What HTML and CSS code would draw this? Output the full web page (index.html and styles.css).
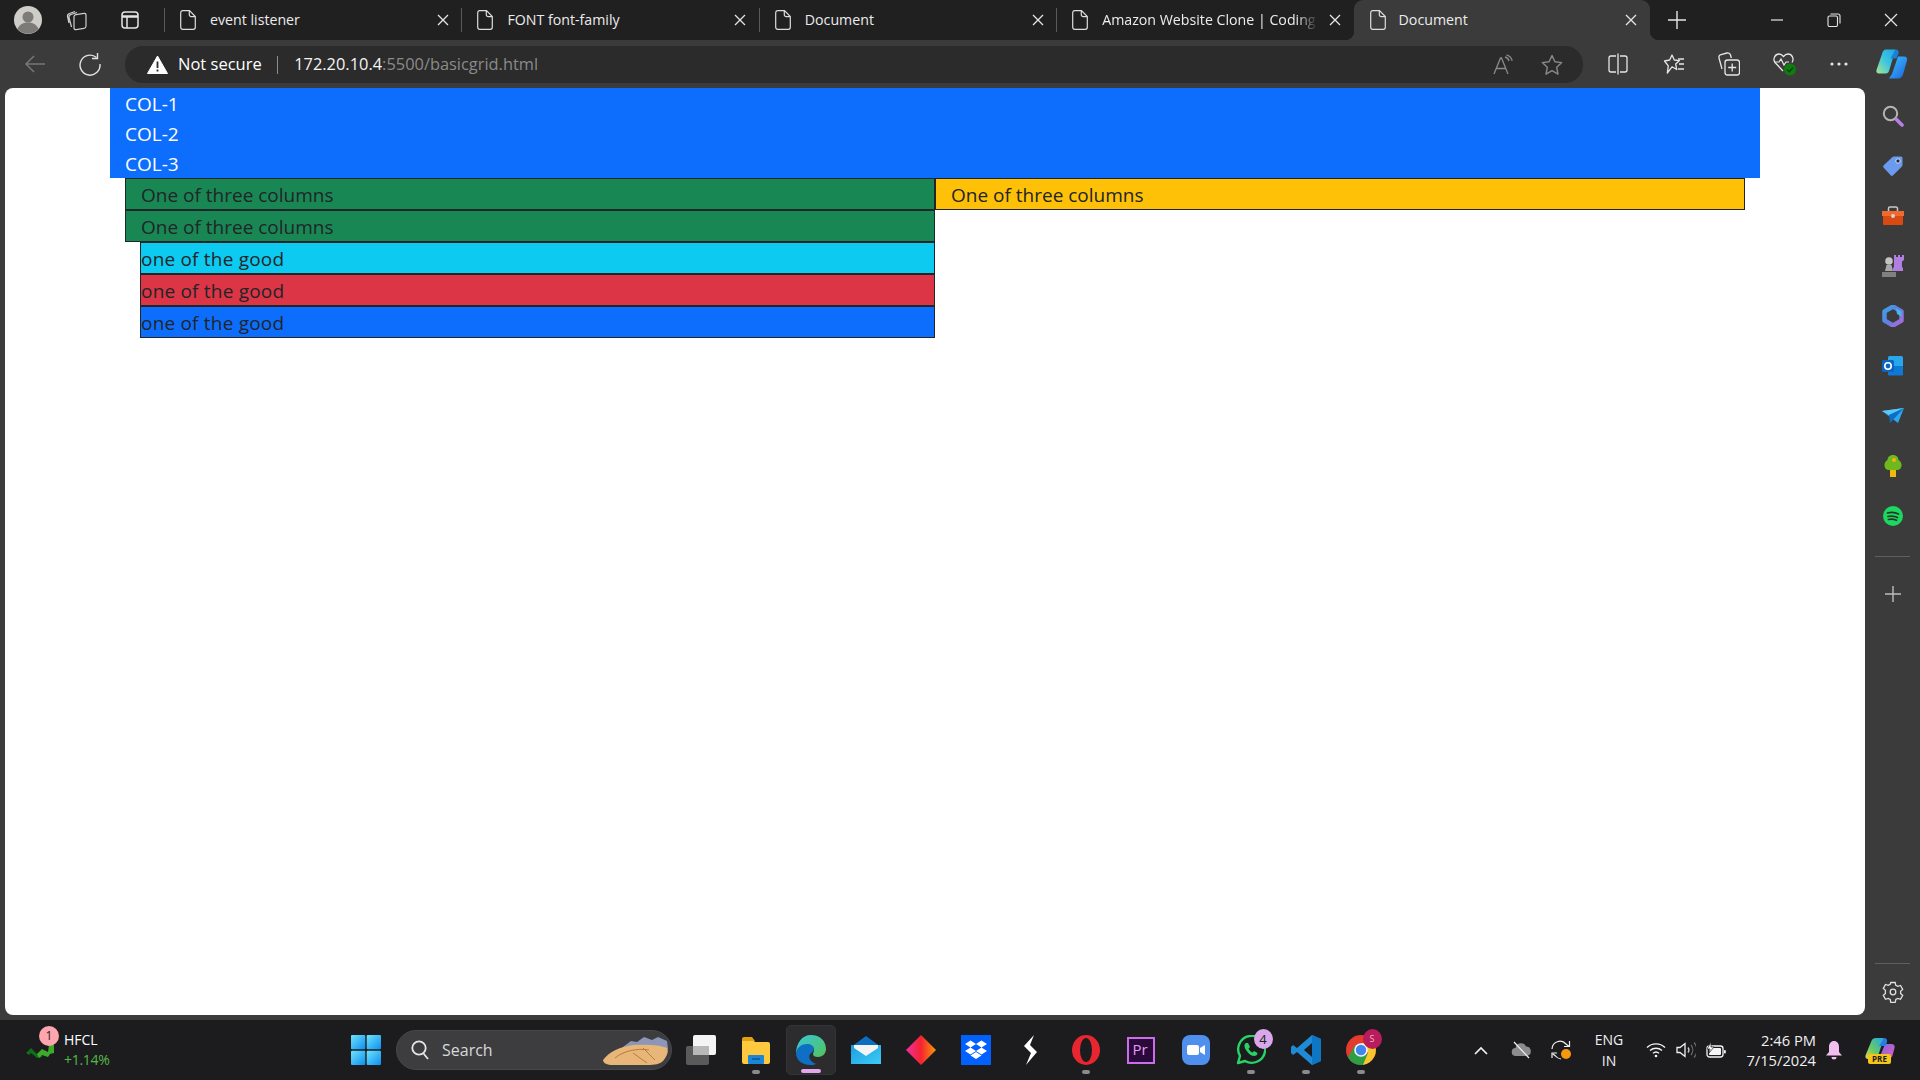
FILE: index.html
```html
<!DOCTYPE html>
<html lang="en">
<head>
<meta charset="utf-8">
<title>Document</title>
<link rel="stylesheet" href="styles.css">
</head>
<body>
<svg class="defs" width="0" height="0" aria-hidden="true">
  <defs>
    <symbol id="doc" viewBox="0 0 16 20"><path d="M2.5 .7h7l5.8 5.8v10.8a2 2 0 0 1-2 2H2.7a2 2 0 0 1-2-2V2.7a2 2 0 0 1 1.8-2zM9.3 .9v3.8a2 2 0 0 0 2 2h3.9" fill="none" stroke="#dcdcdc" stroke-width="1.2"/></symbol>
    <symbol id="x" viewBox="0 0 12 12"><path d="M1 1l10 10M11 1L1 11" stroke="#e6e6e6" stroke-width="1.3" fill="none"/></symbol>
    <linearGradient id="gWin" x1="0" y1="0" x2="1" y2="1"><stop offset="0" stop-color="#6fe3fb"/><stop offset="1" stop-color="#0c8ff0"/></linearGradient>
    <linearGradient id="gCop" x1="0" y1="0" x2="1" y2="1"><stop offset="0" stop-color="#38c6f4"/><stop offset=".55" stop-color="#2a8ff0"/><stop offset="1" stop-color="#1f5fd6"/></linearGradient>
    <linearGradient id="gCop2" x1="0" y1="1" x2="1" y2="0"><stop offset="0" stop-color="#a6e88c"/><stop offset=".5" stop-color="#3fc4e0"/><stop offset="1" stop-color="#19a9e8"/></linearGradient>
    <linearGradient id="gDia" x1="0" y1="0" x2="1" y2="0"><stop offset="0" stop-color="#f02fa0"/><stop offset=".5" stop-color="#f5232f"/><stop offset="1" stop-color="#f79a0a"/></linearGradient>
    <linearGradient id="gEdge" x1="0" y1="0" x2="1" y2="1"><stop offset="0" stop-color="#36c7d8"/><stop offset="1" stop-color="#55c25a"/></linearGradient>
    <linearGradient id="gMail" x1="0" y1="0" x2="1" y2="1"><stop offset="0" stop-color="#1b9de2"/><stop offset="1" stop-color="#3ecbf5"/></linearGradient>
    <linearGradient id="gTrayL" x1="0" y1="1" x2="1" y2="0"><stop offset="0" stop-color="#e8d24a"/><stop offset=".45" stop-color="#62c96a"/><stop offset="1" stop-color="#22a8ee"/></linearGradient>
    <linearGradient id="gTrayR" x1="0" y1="0" x2="1" y2="1"><stop offset="0" stop-color="#7a6ae8"/><stop offset="1" stop-color="#e85cb8"/></linearGradient>
    <linearGradient id="gM365" x1="0" y1="0" x2="1" y2="1"><stop offset="0" stop-color="#3aa2e6"/><stop offset=".5" stop-color="#5f7fe0"/><stop offset="1" stop-color="#b06ad8"/></linearGradient>
  </defs>
</svg>

<div class="tabstrip">
  <div class="strip-left">
    <svg class="avatar" width="28" height="28" viewBox="0 0 28 28"><circle cx="14" cy="14" r="14" fill="#cfcdc8"/><circle cx="14" cy="11" r="5.5" fill="#7d7b78"/><path d="M3.5 23c2-5 6-6.500 10.500-6.500S22.500 18 24.500 23A14 14 0 0 1 3.500 23z" fill="#7d7b78"/></svg>
    <svg class="strip-ic" width="22" height="22" viewBox="0 0 22 22" fill="none" stroke="#cfcfcf" stroke-width="1.2"><rect x="8" y="5" width="12" height="15" rx="2" transform="skewY(-8) translate(0 2)"/><path d="M5.500 18L3 8.500c-.3-1.500.5-2.500 2-3L11 3.500M3 14L1.500 7.500C1.300 6 2 5 3.500 4.500L9 2.500"/></svg>
    <svg class="strip-ic strip-ic-b" width="18" height="18" viewBox="0 0 18 18" fill="none" stroke="#e4e4e4" stroke-width="1.5"><rect x="1" y="1" width="16" height="16" rx="3"/><path d="M1 5.500h16" stroke-width="2.500"/><path d="M6 5.500V17"/></svg>
  </div>
  <div class="tab"><i class="tab-sep"></i><svg class="doc"><use href="#doc"/></svg><span class="tab-title">event listener</span><svg class="tab-x"><use href="#x"/></svg></div>
  <div class="tab"><i class="tab-sep"></i><svg class="doc"><use href="#doc"/></svg><span class="tab-title">FONT font-family</span><svg class="tab-x"><use href="#x"/></svg></div>
  <div class="tab"><i class="tab-sep"></i><svg class="doc"><use href="#doc"/></svg><span class="tab-title">Document</span><svg class="tab-x"><use href="#x"/></svg></div>
  <div class="tab tab-prev"><i class="tab-sep"></i><svg class="doc"><use href="#doc"/></svg><span class="tab-title tab-fade">Amazon Website Clone | Coding</span><svg class="tab-x"><use href="#x"/></svg></div>
  <div class="tab tab-active"><svg class="doc"><use href="#doc"/></svg><span class="tab-title">Document</span><svg class="tab-x"><use href="#x"/></svg></div>
  <svg class="new-tab" width="18" height="18" viewBox="0 0 18 18"><path d="M9 0v18M0 9h18" stroke="#e6e6e6" stroke-width="1.400"/></svg>
  <div class="win-ctrls">
    <svg class="win-btn" width="14" height="14" viewBox="0 0 14 14"><path d="M1 7h12" stroke="#e6e6e6" stroke-width="1.200"/></svg>
    <svg class="win-btn" width="14" height="14" viewBox="0 0 14 14" fill="none" stroke="#e6e6e6" stroke-width="1.100"><rect x="1" y="3" width="9.500" height="10.500" rx="1.500"/><path d="M3.500 1h7.500a2 2 0 0 1 2 2v7.500"/></svg>
    <svg class="win-btn" width="14" height="14" viewBox="0 0 14 14"><path d="M1 1l12 12M13 1L1 13" stroke="#e6e6e6" stroke-width="1.200"/></svg>
  </div>
</div>

<div class="toolbar">
  <svg class="back" width="24" height="24" viewBox="0 0 24 24" fill="none" stroke="#777" stroke-width="1.500"><path d="M3 12h19M11 4l-8 8 8 8"/></svg>
  <svg class="reload" width="24" height="24" viewBox="0 0 24 24" fill="none" stroke="#e2e2e2" stroke-width="1.400"><path d="M18.500 5.500A10 10 0 1 0 22 12"/><path d="M19.500 1v5.500H14"/></svg>
  <div class="address">
    <svg class="warn" width="21" height="19" viewBox="0 0 21 19"><path d="M10.500 1L20.500 18.500H.5z" fill="#fff" stroke="#fff" stroke-linejoin="round"/><path d="M10.500 6.500v6.500M10.500 14.500v2" stroke="#2b2b2b" stroke-width="1.800"/></svg>
    <span class="not-secure">Not secure</span>
    <i class="addr-sep"></i>
    <span class="url"><b class="url-host">172.20.10.4</b>:5500/basicgrid.html</span>
    <div class="addr-right">
      <svg width="22" height="22" viewBox="0 0 22 22" fill="none" stroke="#8a8a8a" stroke-width="1.300"><path d="M2 20L8.500 4h1L16 20M4.500 14.500h9.500"/><path d="M13 3c2 .5 3.500 2 4 4M14.500 .8c3 .8 5 3 5.700 6"/></svg>
      <svg width="22" height="22" viewBox="0 0 22 22" fill="none" stroke="#8a8a8a" stroke-width="1.400" stroke-linejoin="round"><path d="M11 1.500l2.900 6.300 6.800.8-5 4.700 1.300 6.800-6-3.400-6 3.400 1.300-6.800-5-4.700 6.800-.8z"/></svg>
    </div>
  </div>
  <div class="tool-btns">
    <span class="tool-slot"><svg width="20" height="22" viewBox="0 0 20 22" fill="none" stroke="#e6e6e6" stroke-width="1.300"><path d="M8 3H3a2 2 0 0 0-2 2v12a2 2 0 0 0 2 2h5M12 3h5a2 2 0 0 1 2 2v12a2 2 0 0 1-2 2h-5M10 .5v21"/></svg></span>
    <span class="tool-slot"><svg width="22" height="22" viewBox="0 0 22 22" fill="none" stroke="#e6e6e6" stroke-width="1.300" stroke-linejoin="round"><path d="M9 2l2.300 5 5.200.6-3.800 3.500 1 5.400L9 13.800 4.300 20l1-7.100L1.500 8l5.200-1z"/><path d="M15 6h6M16 11h5M15 16h6"/></svg></span>
    <span class="tool-slot"><svg width="22" height="24" viewBox="0 0 22 24" fill="none" stroke="#e6e6e6" stroke-width="1.300"><path d="M4 17L1 6c-.4-1.500.4-3 2-3.400L9 1c1.700-.4 3 .5 3.500 2l.8 3"/><rect x="7" y="8" width="14.500" height="15" rx="2.500"/><path d="M14.200 11.500v8M10.200 15.500h8"/></svg></span>
    <span class="tool-slot tool-health"><svg width="24" height="26" viewBox="0 0 24 26"><path d="M10 20L2 11.500C-.5 8 2 3 6 3c2 0 3.300 1 4.500 2.500C11.700 4 13 3 15 3c4 0 6.500 4.800 4 8.500" fill="none" stroke="#e6e6e6" stroke-width="1.300"/><path d="M1.500 11H6l2-3 3 6 2-3h3" fill="none" stroke="#e6e6e6" stroke-width="1.200"/><circle cx="17" cy="18.500" r="6" fill="#107c10"/><path d="M14 18.500l2.200 2.200 3.800-4" fill="none" stroke="#0a3d0a" stroke-width="1.300"/></svg></span>
    <span class="tool-slot"><svg width="18" height="4" viewBox="0 0 18 4" fill="#e6e6e6"><circle cx="2" cy="2" r="1.600"/><circle cx="9" cy="2" r="1.600"/><circle cx="16" cy="2" r="1.600"/></svg></span>
    <span class="tool-slot tool-copilot"><svg width="32" height="32" viewBox="0 0 32 32"><path d="M10 1.500h9.500L13 23c-.8 2-2 2.500-4 2.500H3c-2 0-3-1.500-2.500-3.500L6 6c.8-3 2-4.500 4-4.500z" fill="url(#gCop2)"/><path d="M13 30.500h9c2.500 0 4-1.500 5-4l4-14c.7-2.500-.6-4-3-4h-6L16 26z" fill="url(#gCop)"/><path d="M19.500 1.500c2.500 0 3.500 2 3 4l-2 5h-6z" fill="#1b7fd8"/></svg></span>
  </div>
</div>

<div class="main">
  <div class="viewport">
    <div class="container">
      <div class="blue-row">
        <div class="line">COL-1</div>
        <div class="line">COL-2</div>
        <div class="line">COL-3</div>
      </div>
      <div class="cols">
        <div class="col-left">
          <div class="cell pad green">One of three columns</div>
          <div class="cell pad green">One of three columns</div>
          <div class="nested">
            <div class="cell cyan">one of the good</div>
            <div class="cell red">one of the good</div>
            <div class="cell blue">one of the good</div>
          </div>
        </div>
        <div class="cell pad yellow">One of three columns</div>
      </div>
    </div>
  </div>
  <aside class="sidebar">
    <span class="side-slot"><svg width="22" height="22" viewBox="0 0 22 22"><circle cx="8.500" cy="8.500" r="6.700" fill="none" stroke="#b5b5b5" stroke-width="2"/><path d="M14.500 14.500l5.500 5.500" stroke="#b57fe6" stroke-width="3.600" stroke-linecap="round"/></svg></span>
    <span class="side-slot"><svg width="22" height="22" viewBox="0 0 22 22"><path d="M12 1.500h7a1.500 1.500 0 0 1 1.500 1.500v7a2 2 0 0 1-.6 1.500l-9 9a1.500 1.500 0 0 1-2 0L1.500 12.600a1.500 1.500 0 0 1 0-2l9-8.500A2.200 2.200 0 0 1 12 1.500z" fill="#6a9bee"/><circle cx="16" cy="6" r="2.200" fill="#2a2a33" stroke="#d8e5fb"/></svg></span>
    <span class="side-slot"><svg width="22" height="22" viewBox="0 0 22 22"><path d="M6.500 7V3.500a1.500 1.500 0 0 1 1.500-1.500h6a1.500 1.500 0 0 1 1.500 1.500V7" fill="none" stroke="#c9c9c9" stroke-width="1.500"/><path d="M0 6h22v5H0z" fill="#ef6a2e"/><path d="M1 11h20v8a1 1 0 0 1-1 1H2a1 1 0 0 1-1-1z" fill="#d94a12"/><rect x="9" y="9" width="4" height="4" rx="2" fill="#d8d0cc"/></svg></span>
    <span class="side-slot"><svg width="24" height="24" viewBox="0 0 24 24"><path d="M14 1h2v2h2V1h2v2h2V1h2v5l-2 1.500V13l1 1v3H13v-3l1-1V7.500L14 6z" fill="#b17fe0" transform="translate(-1 0)"/><circle cx="8" cy="7" r="3.800" fill="#c4c4c4"/><path d="M5.500 11h5l1.500 6H4z" fill="#a8a8a8"/><path d="M1 18h14v5H1z" fill="#808080"/></svg></span>
    <span class="side-slot"><svg width="22" height="22" viewBox="0 0 22 22"><path d="M11 1.500L19.500 6.500v9L11 20.500 2.500 15.500v-9z" fill="none" stroke="url(#gM365)" stroke-width="4.500" stroke-linejoin="round"/><path d="M14 3.500l5.500 3v5L15 9z" fill="#4ab4ee"/></svg></span>
    <span class="side-slot"><svg width="22" height="20" viewBox="0 0 22 20"><rect x="6" y="0" width="15" height="19" rx="1.500" fill="#28a8ea"/><path d="M6 10h15v8a1.500 1.500 0 0 1-1.500 1.500H7.500A1.500 1.500 0 0 1 6 18z" fill="#0f78d4"/><rect x="0" y="4" width="12" height="12" rx="1.500" fill="#0a64c0"/><circle cx="6" cy="10" r="3.200" fill="none" stroke="#fff" stroke-width="1.600"/></svg></span>
    <span class="side-slot"><svg width="22" height="16" viewBox="0 0 22 16"><path d="M0 3l22-3-6 15z" fill="#2ea6f0"/><path d="M0 3l22-3L7 7z" fill="#5cc8f8"/><path d="M7 7L22 0 8 15z" fill="#0b6fc4"/></svg></span>
    <span class="side-slot"><svg width="18" height="22" viewBox="0 0 18 22"><rect x="6" y="14" width="6" height="8" fill="#f2b60f"/><path d="M9 0c3.500 0 5.500 2.500 5.500 5 2 1 3.500 3.500 3 6-.5 2.500-2 4-4 4h-9c-2 0-3.500-1.500-4-4-.5-2.500 1-5 3-6C3.500 2.500 5.500 0 9 0z" fill="#6fb81e"/><circle cx="10" cy="5" r="2" fill="#f2b60f"/></svg></span>
    <span class="side-slot"><svg width="20" height="20" viewBox="0 0 20 20"><circle cx="10" cy="10" r="10" fill="#1ed760"/><g fill="none" stroke="#1c3a28" stroke-width="1.700" stroke-linecap="round"><path d="M4.500 7c3.800-1 7.500-.8 11 1"/><path d="M5 10.500c3.200-.8 6.500-.6 9.500 1"/><path d="M5.500 13.500c2.700-.6 5.500-.4 8 .8"/></g></svg></span>
    <i class="side-sep side-sep-a"></i>
    <span class="side-slot side-plus"><svg width="16" height="16" viewBox="0 0 16 16"><path d="M8 0v16M0 8h16" stroke="#bdbdbd" stroke-width="1.400"/></svg></span>
    <i class="side-sep side-sep-b"></i>
    <span class="side-slot side-gear"><svg width="22" height="22" viewBox="0 0 22 22" fill="none" stroke="#e0e0e0" stroke-width="1.300"><path d="M8.800 1.500h4.400l.6 2.800 2 1.100 2.700-.9 2.200 3.900-2.100 1.900v2.200l2.100 1.900-2.200 3.900-2.700-.9-2 1.100-.6 2.800H8.800l-.6-2.800-2-1.100-2.700.9-2.200-3.900 2.100-1.900V9.300L1.300 7.400l2.200-3.900 2.700.9 2-1.100z"/><circle cx="11" cy="11" r="2.800"/></svg></span>
  </aside>
</div>

<footer class="taskbar">
  <div class="widget">
    <span class="widget-icon">
      <svg width="28" height="15" viewBox="0 0 28 15"><path d="M0 10l5-5 6 6 5-4v7l-5 1-6-5-2 2z" fill="#0f6e1a"/><path d="M11 11l5-5 6 3 1-7h5v8l-4 1-2 3-6-2-3 3z" fill="#3eaa2a"/></svg>
      <b class="widget-badge">1</b>
    </span>
    <span class="widget-text"><span class="widget-name">HFCL</span><span class="widget-val">+1.14%</span></span>
  </div>
  <svg class="start" width="30" height="30" viewBox="0 0 30 30" fill="url(#gWin)"><rect width="14.300" height="14.300" rx="1"/><rect x="15.700" width="14.300" height="14.300" rx="1"/><rect y="15.700" width="14.300" height="14.300" rx="1"/><rect x="15.700" y="15.700" width="14.300" height="14.300" rx="1"/></svg>
  <div class="search">
    <svg width="18" height="20" viewBox="0 0 18 20" fill="none" stroke="#e6e6e6" stroke-width="1.800"><circle cx="8" cy="8" r="6.700"/><path d="M12.500 13.500l4.500 5.500"/></svg>
    <span class="search-text">Search</span>
    <svg class="search-art" width="66" height="30" viewBox="0 0 66 30"><path d="M20 12l8-6 6 1 7-5 8 3 6-3 9 4 1 8-40 3z" fill="#8d96b8"/><path d="M0 25C6 17 16 12 30 10c14-1 28 0 34 3 2 3 0 8-4 13-3 3-8 4-16 4H10C4 30 0 28 0 25z" fill="#e8b678"/><path d="M12 23c8-7 22-10 34-8M40 13l12 12M30 18l14 10" fill="none" stroke="#b77c3c" stroke-width="1"/></svg>
  </div>
  <div class="apps">
    <span class="app"><svg width="30" height="30" viewBox="0 0 30 30"><rect x="0" y="11" width="23" height="19" rx="2" fill="#5a5a5a"/><rect x="7" y="0" width="23" height="20" rx="2" fill="#f4f4f4"/><rect x="7" y="11" width="16" height="9" fill="#b8b8b8"/></svg></span>
    <span class="app app-on"><svg width="30" height="28" viewBox="0 0 30 28"><path d="M1 5a2 2 0 0 1 2-2h8l3 3h13a2 2 0 0 1 2 2v18a2 2 0 0 1-2 2H3a2 2 0 0 1-2-2z" fill="#ffc93f"/><path d="M1 3a2 2 0 0 1 2-2h8l3 4H1z" fill="#e0a010"/><rect x="7" y="19" width="16" height="9" rx="1" fill="#1a86d8"/><path d="M11 23h8" stroke="#0b4d8a" stroke-width="1.300"/></svg><i class="dot"></i></span>
    <span class="app app-active"><svg width="30" height="30" viewBox="0 0 30 30"><path d="M15 0c9 0 15 6 15 14 0 5-4 8-8 8-3 0-5-1-5-3 0-1 1-2 1-4 0-3-3-5-7-5C6 10 1 14 0 19 0 8 6 0 15 0z" fill="url(#gEdge)"/><path d="M0 18C1 12 6 9 11 9c4 0 7 2 7 5 0 2-2 3-4 5-2 3 0 8 6 10-2 1-4 1-6 1C6 30 0 25 0 18z" fill="#0f6fc4"/></svg><i class="dot dot-active"></i></span>
    <span class="app"><svg width="30" height="28" viewBox="0 0 30 28"><path d="M15 0l15 11H0z" fill="#0c6ec0"/><rect x="0" y="9" width="30" height="19" fill="url(#gMail)"/><path d="M3 9h24v3l-12 8-12-8z" fill="#f4f4f4"/></svg></span>
    <span class="app"><svg width="30" height="30" viewBox="0 0 30 30"><path d="M15 0l15 15-15 15L0 15z" fill="url(#gDia)"/></svg></span>
    <span class="app"><svg width="30" height="30" viewBox="0 0 30 30"><rect width="30" height="30" fill="#0061ff"/><path d="M9.500 5.500L15 9l-5.500 3.500L4 9zM20.500 5.500L26 9l-5.500 3.500L15 9zM9.500 12.500L15 16l-5.500 3.500L4 16zM20.500 12.500L26 16l-5.500 3.500L15 16zM9.500 20.500L15 17l5.500 3.500L15 24z" fill="#fff"/></svg></span>
    <span class="app"><svg width="16" height="30" viewBox="0 0 16 30"><path d="M11 0L1 11l7 7-5 12 11-13-7-7z" fill="#fff"/></svg></span>
    <span class="app"><svg width="28" height="30" viewBox="0 0 28 30"><ellipse cx="14" cy="15" rx="14" ry="15" fill="#e8262f"/><ellipse cx="14" cy="15" rx="6" ry="12" fill="#1c1c1f"/></svg><i class="dot"></i></span>
    <span class="app"><svg width="28" height="27" viewBox="0 0 28 27"><rect x="1" y="1" width="26" height="25" fill="#2a0a3a" stroke="#cc6ce8" stroke-width="2"/></svg><b class="pr">Pr</b></span>
    <span class="app"><svg width="28" height="30" viewBox="0 0 28 30"><rect width="28" height="30" rx="8" fill="#4f90ee"/><rect x="5" y="10" width="12" height="10" rx="2" fill="#fff"/><path d="M18 13l5-3v10l-5-3z" fill="#fff"/></svg></span>
    <span class="app"><svg width="30" height="30" viewBox="0 0 30 30"><path d="M2 28l2-7A13.500 13.500 0 1 1 9 26z" fill="#1c1c1f" stroke="#28d366" stroke-width="2.400" stroke-linejoin="round"/><path d="M10 8c-2 1-2 4 0 7 2 3 5 6 8 6 2 0 3.500-1 3.500-3l-3.500-2-1.500 1.500c-1.500-.5-3.500-2.500-4-4l1.500-1.500-2-4z" fill="#28d366"/></svg><b class="app-badge app-badge-w">4</b><i class="dot"></i></span>
    <span class="app"><svg width="30" height="30" viewBox="0 0 30 30"><path d="M21 0l9 4v22l-9 4L6 17l-4 3-2-2V12l2-2 4 3z" fill="#1f8ad6"/><path d="M21 0l9 4v22l-9 4z" fill="#0f76c4"/><path d="M21 8l-8 7 8 7z" fill="#1c1c1f"/></svg><i class="dot"></i></span>
    <span class="app"><svg width="30" height="30" viewBox="0 0 30 30"><circle cx="15" cy="15" r="15" fill="#e33b2e"/><path d="M15 30A15 15 0 0 1 2 22.500L9 10l6 5 7 5-3 9.500A15 15 0 0 1 15 30z" fill="#2e9e45"/><path d="M15 8h13.200A15 15 0 0 1 17 29.800L22 18z" fill="#f7c72d"/><circle cx="15" cy="15" r="6.800" fill="#f4f4f4"/><circle cx="15" cy="15" r="5.200" fill="#3f86ee"/></svg><b class="app-badge app-badge-c">S</b><i class="dot"></i></span>
  </div>
  <div class="tray">
    <span class="tray-slot t40"><svg width="14" height="9" viewBox="0 0 14 9"><path d="M1 8l6-6 6 6" fill="none" stroke="#f0f0f0" stroke-width="1.700"/></svg></span>
    <span class="tray-slot t40"><svg width="21" height="18" viewBox="0 0 21 18"><path d="M5 15a4 4 0 0 1-.5-8A5.500 5.500 0 0 1 15 5.500a4.800 4.800 0 0 1 1 9.500z" fill="#8c8c8c"/><path d="M3 1l15 16" stroke="#f0f0f0" stroke-width="1.200"/></svg></span>
    <span class="tray-slot t40"><svg width="21" height="20" viewBox="0 0 21 20"><path d="M1 9A8 8 0 0 1 15 4l3 2.500M18.500 1v5.500H13M2 14l2.500 2A8 8 0 0 0 10 19M1 18v-5h5" fill="none" stroke="#f0f0f0" stroke-width="1.200"/><circle cx="15" cy="14" r="5" fill="#f7980f"/></svg></span>
    <span class="tray-lang"><span>ENG</span><span>IN</span></span>
    <span class="tray-slot t30"><svg width="20" height="16" viewBox="0 0 20 16" fill="none" stroke="#f4f4f4" stroke-width="1.400"><path d="M1 5.500a13 13 0 0 1 18 0M4 8.500a9 9 0 0 1 12 0M7 11.300a4.500 4.500 0 0 1 6 0"/><circle cx="10" cy="14" r="1.300" fill="#f4f4f4" stroke="none"/></svg></span>
    <span class="tray-slot t29"><svg width="20" height="18" viewBox="0 0 20 18" fill="none" stroke-width="1.300"><path d="M1 6.500h3L9 2.500v13L4 11.500H1z" stroke="#f0f0f0"/><path d="M12 6.500a4 4 0 0 1 0 5" stroke="#d0d0d0"/><path d="M15 4a8 8 0 0 1 0 10M18 1.500a11 11 0 0 1 0 15" stroke="#666"/></svg></span>
    <span class="tray-slot t32"><svg width="20" height="16" viewBox="0 0 20 16"><rect x="1" y="4" width="16" height="11" rx="2.500" fill="none" stroke="#f4f4f4" stroke-width="1.300"/><rect x="3" y="6" width="12" height="7" rx="1" fill="#f4f4f4"/><rect x="18" y="8" width="1.800" height="3.500" rx=".8" fill="#f4f4f4"/><path d="M5 0L1 7h3l-1 4 5-6H5z" fill="#f4f4f4" stroke="#1c1c1f" stroke-width=".7"/></svg></span>
    <span class="tray-clock"><span>2:46 PM</span><span>7/15/2024</span></span>
    <span class="tray-slot t36"><svg width="16" height="19" viewBox="0 0 16 19"><path d="M8 0c3 0 5 2.500 5 6v5l3 3.500H0L3 11V6c0-3.500 2-6 5-6z" fill="#f0bff0"/><path d="M5.500 16h5a2.500 2.500 0 0 1-5 0z" fill="#f0bff0"/></svg></span>
    <span class="tray-slot t56 tray-cop"><svg width="30" height="24" viewBox="0 0 30 24"><path d="M11 0h8l-6 18c-.6 2-2 3-4 3H3c-2 0-3-1.500-2.500-3.500L6 4c.8-2.500 2.500-4 5-4z" fill="url(#gTrayL)"/><path d="M14 21h9c2 0 3.500-1 4.500-3.500L29.500 10c.6-2.400-.6-4-3-4H20z" fill="url(#gTrayR)"/><path d="M19 0c2.500 0 3.500 2 3 4l-1.500 4H14z" fill="#2a7de0"/></svg><b class="pre">PRE</b></span>
  </div>
</footer>
</body>
</html>
```
FILE: styles.css
```css
* { box-sizing: border-box; }
html, body { margin: 0; height: 1080px; overflow: hidden; }
body { background: #3b3b3b; font-family: "Open Sans", "Liberation Sans", sans-serif; display: flex; flex-direction: column; }
.defs { position: absolute; }
svg { display: block; flex: none; }

/* Tab strip */
.tabstrip { height: 40px; background: #202020; display: flex; align-items: center; flex: none; }
.strip-left { width: 164px; height: 40px; display: flex; align-items: center; padding-left: 14px; flex: none; }
.strip-ic { margin-left: 24px; }
.strip-ic-b { margin-left: 33px; }
.tab { width: 297.400px; height: 40px; display: flex; align-items: center; flex: none; color: #ececec; font-size: 14.200px; position: relative; }
.tab-sep { width: 1px; height: 24px; background: #5a5a5a; margin-right: 15px; flex: none; }
.doc { width: 16px; height: 20px; }
.tab-title { margin-left: 14px; margin-bottom: 2px; width: 222px; white-space: nowrap; }
.tab-fade { -webkit-mask-image: linear-gradient(90deg, #000 90%, transparent 100%); mask-image: linear-gradient(90deg, #000 90%, transparent 100%); width: 216px; }
.tab-x { width: 12px; height: 12px; margin-left: 5px; flex: none; }
.tab-prev .tab-x { margin-left: 11px; }
.tab-active { width: 296px; background: #3b3b3b; border-radius: 9px 9px 0 0; padding-left: 16px; }
.tab-active .tab-title { width: 220px; margin-left: 13px; }
.tab-active .tab-x { margin-left: 6px; }
.tab-active::before, .tab-active::after { content: ""; position: absolute; bottom: 0; width: 9px; height: 9px; }
.tab-active::before { left: -9px; background: radial-gradient(circle at 0 0, #202020 9px, #3b3b3b 9.500px); }
.tab-active::after { right: -9px; background: radial-gradient(circle at 100% 0, #202020 9px, #3b3b3b 9.500px); }
.new-tab { margin-left: 18px; }
.win-ctrls { margin-left: auto; display: flex; align-items: center; padding-right: 22px; gap: 43px; }

/* Toolbar */
.toolbar { height: 48px; background: #3b3b3b; display: flex; align-items: center; flex: none; padding-left: 23px; padding-bottom: 1px; }
.reload { margin-left: 31px; }
.address { width: 1460px; height: 37px; margin-left: 23px; margin-top: 2px; border-radius: 18px; background: #2b2b2b; display: flex; align-items: center; padding-left: 22px; padding-right: 20px; }
.not-secure { color: #fff; font-size: 16.500px; margin-left: 10px; white-space: nowrap; margin-bottom: 2px; }
.addr-sep { width: 1px; height: 18px; background: #8d8d8d; margin-left: 15px; }
.url { color: #8a8a8a; font-size: 16.400px; margin-left: 16.500px; white-space: nowrap; margin-bottom: 2px; }
.url-host { color: #f4f4f4; font-weight: 400; }
.addr-right { margin-left: auto; display: flex; align-items: center; gap: 27px; }
.tool-btns { display: flex; align-items: center; margin-left: 8px; }
.tool-slot { width: 55.200px; height: 36px; display: flex; align-items: center; justify-content: center; }
.tool-health svg { margin-left: 1px; }
.tool-copilot { margin-left: -2px; }

/* Main */
.main { height: 932px; display: flex; flex: none; }
.viewport { width: 1860px; height: 927px; margin-left: 5px; background: #fff; border-radius: 8px; overflow: hidden; flex: none; font-size: 19px; line-height: 30px; color: #212529; }
.container { width: 1650px; margin-left: 105px; }
.blue-row { background: #0d6efd; color: #fff; padding: 0 15px; }
.line { height: 30px; padding-top: 1px; }
.cols { display: grid; grid-template-columns: 810px 810px; margin: 0 15px; align-items: start; }
.cell { border: 1px solid #212529; height: 32px; padding-top: 1px; white-space: nowrap; }
.pad { padding-left: 15px; padding-right: 15px; }
.green { background: #198754; }
.yellow { background: #ffc107; }
.nested { margin-left: 15px; letter-spacing: .2px; }
.cyan { background: #0dcaf0; }
.red { background: #dc3545; }
.blue { background: #0d6efd; }

/* Sidebar */
.sidebar { width: 55px; height: 932px; display: flex; flex-direction: column; align-items: center; padding-top: 3px; flex: none; }
.side-slot { width: 55px; height: 50px; display: flex; align-items: center; justify-content: center; flex: none; }
.side-sep { width: 35px; height: 1px; background: #5f5f5f; flex: none; }
.side-sep-a { margin-top: 15px; }
.side-plus { margin-top: 12px; }
.side-sep-b { margin-top: 344px; }
.side-gear { margin-top: 3px; }

/* Taskbar */
.taskbar { height: 60px; background: #1c1c1f; display: flex; align-items: center; flex: none; color: #f4f4f4; }
.widget { width: 351px; display: flex; align-items: center; padding-left: 26px; flex: none; }
.widget-icon { width: 28px; height: 15px; margin-top: 1px; position: relative; flex: none; }
.widget-badge { position: absolute; left: 13px; top: -17px; width: 20px; height: 20px; border-radius: 50%; background: #ffa5ae; color: #222; font-size: 12px; font-weight: 400; text-align: center; line-height: 20px; }
.widget-text { display: flex; flex-direction: column; margin-left: 10px; font-size: 14px; line-height: 20px; }
.widget-name { color: #fff; }
.widget-val { color: #57b947; letter-spacing: -.3px; }
.search { width: 276px; height: 40px; margin-left: 15px; border-radius: 20px; background: #3d3d40; display: flex; align-items: center; padding-left: 14px; flex: none; position: relative; overflow: hidden; border: 1px solid #48484b; }
.search-text { margin-left: 13px; font-size: 16px; color: #d8d8d8; }
.search-art { margin-left: auto; margin-right: 2px; }
.apps { display: flex; margin-left: 1.500px; flex: none; }
.app { width: 55px; height: 50px; display: flex; align-items: center; justify-content: center; position: relative; flex: none; }
.app-active { background: #2c2c2f; border-radius: 5px; border: 1px solid #343437; width: 50px; margin: 0 2.500px; }
.dot { position: absolute; left: 50%; margin-left: -4px; bottom: 1px; width: 8px; height: 4px; border-radius: 2px; background: #8a8a8a; }
.dot-active { width: 20px; margin-left: -10px; background: #e2a8ec; }
.pr { position: absolute; left: 19px; top: 14px; color: #e69cf5; font-size: 15px; font-weight: 400; }
.app-badge { position: absolute; width: 19px; height: 20px; border-radius: 50%; text-align: center; font-weight: 400; line-height: 20px; }
.app-badge-w { left: 30px; top: 4px; background: #d9a8ea; color: #222; font-size: 13px; }
.app-badge-c { left: 29px; top: 4px; background: #b81c5c; color: #f0b0c8; font-size: 9px; }
.tray { margin-left: auto; padding-right: 12px; display: flex; align-items: center; }
.tray-slot { height: 40px; display: flex; align-items: center; justify-content: center; flex: none; position: relative; }
.t40 { width: 40px; }
.t30 { width: 30px; }
.t29 { width: 29px; }
.t32 { width: 32px; }
.t36 { width: 36px; }
.t56 { width: 56px; }
.tray-lang { width: 56px; margin-right: 4px; display: flex; flex-direction: column; align-items: center; font-size: 14px; line-height: 21px; color: #f0f0f0; }
.tray-clock { width: 84px; display: flex; flex-direction: column; align-items: flex-end; font-size: 14.700px; line-height: 20px; color: #f0f0f0; white-space: nowrap; }
.pre { position: absolute; left: 16px; top: 24px; width: 23px; height: 10px; border-radius: 2px; background: #f5c518; color: #1c1c1f; font-size: 8px; line-height: 10px; font-weight: 700; text-align: center; }
```
